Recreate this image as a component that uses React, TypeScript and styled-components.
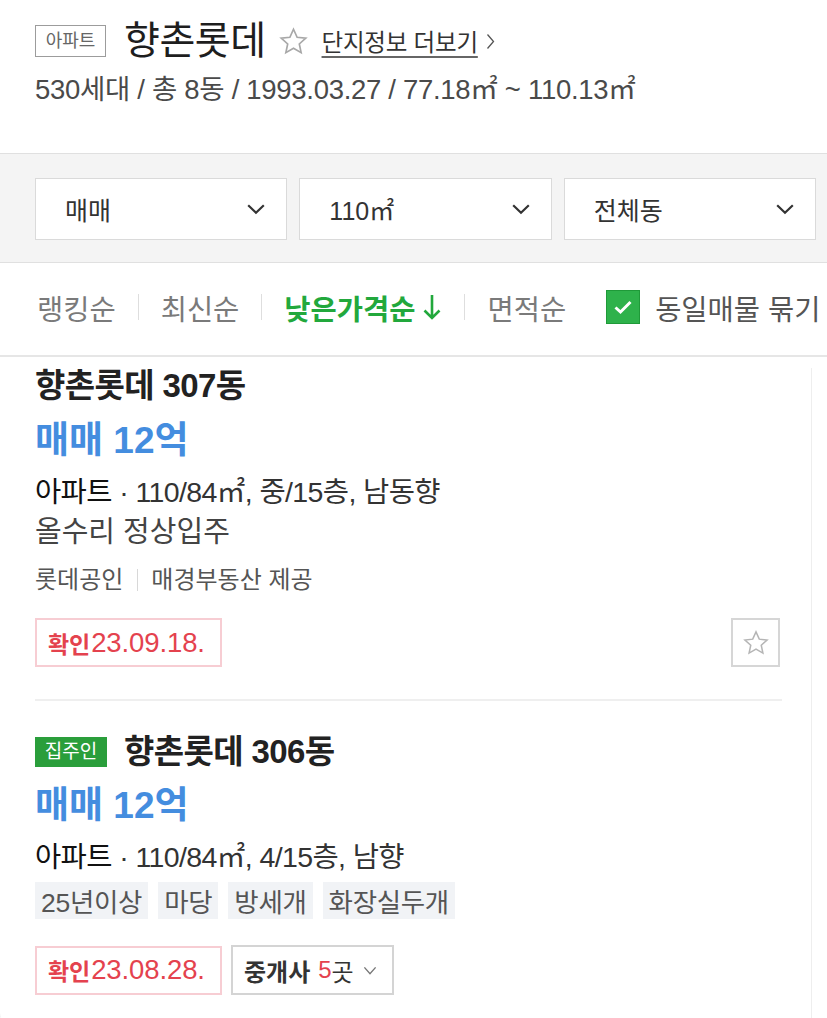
import React from "react";
import styled, { createGlobalStyle } from "styled-components";

const GlobalStyle = createGlobalStyle`
  html, body { margin: 0; padding: 0; background: #fff; }
  body { font-family: "Liberation Sans", "Noto Sans CJK KR", sans-serif; color: #222; }
  * { box-sizing: border-box; }
`;

const Page = styled.div`
  width: 827px;
  height: 1018px;
  overflow: hidden;
  background: #fff;
`;

/* ---------- header ---------- */
const Header = styled.header`
  height: 153px;
  padding: 18px 0 0 35px;
`;
const TitleRow = styled.div`
  display: flex;
  align-items: center;
  height: 46px;
`;
const TypeTag = styled.span`
  display: inline-flex;
  align-items: center;
  justify-content: center;
  width: 71px;
  height: 32px;
  border: 1px solid #9c9c9c;
  color: #666;
  font-size: 18px;
  line-height: 1;
`;
const ComplexName = styled.h1`
  margin: 0 0 0 18px;
  font-size: 39px;
  font-weight: 400;
  color: #1e1e1e;
  line-height: 46px;
  letter-spacing: -0.5px;
`;
const StarIcon = styled.svg<{ $size: number }>`
  width: ${(p) => p.$size}px;
  height: ${(p) => p.$size}px;
  flex: none;
`;
const HeaderStar = styled.span`
  display: inline-flex;
  margin-left: 12px;
`;
const MoreLink = styled.a`
  margin-left: 13px;
  display: inline-flex;
  align-items: center;
  gap: 8px;
  font-size: 23.5px;
  color: #333;
  text-decoration: underline;
  text-underline-offset: 5px;
  text-decoration-color: #666;
  letter-spacing: -0.2px;
`;
const Summary = styled.div`
  margin-top: 11px;
  font-size: 27.5px;
  line-height: 30px;
  color: #4a4a4a;
  letter-spacing: -0.3px;
`;

/* ---------- filters ---------- */
const FilterBar = styled.div`
  border-top: 1px solid #e0e0e0;
  border-bottom: 1px solid #e0e0e0;
  background: #f4f4f4;
  padding: 24px 11px 22px 35px;
  display: grid;
  grid-template-columns: repeat(3, 1fr);
  gap: 12px;
`;
const SelectBox = styled.div`
  height: 62px;
  background: #fff;
  border: 1px solid #dadada;
  display: flex;
  align-items: center;
  justify-content: space-between;
  padding: 0 20px 0 29px;
  font-size: 25px;
  color: #333;
`;

/* ---------- sort row ---------- */
const SortRow = styled.div`
  height: 94px;
  border-bottom: 2px solid #e6e6e6;
  display: flex;
  align-items: center;
  padding: 0 0 4px 37px;
  font-size: 28.5px;
  color: #7a7a7a;
`;
const SortItem = styled.span<{ $active?: boolean }>`
  display: inline-flex;
  align-items: center;
  color: ${(p) => (p.$active ? "#22a83c" : "#7a7a7a")};
  font-weight: ${(p) => (p.$active ? 700 : 400)};
  white-space: nowrap;
`;
const SortArrow = styled.svg`
  margin-left: 7px;
  flex: none;
`;
const SortSep = styled.span`
  width: 1px;
  height: 26px;
  background: #dedede;
  margin: 0 22px;
`;
const CheckLabel = styled.label`
  display: flex;
  align-items: center;
  gap: 15px;
  margin-left: 40px;
  color: #555;
  white-space: nowrap;
`;
const CheckBox = styled.span`
  width: 34px;
  height: 34px;
  background: #2eb24b;
  border: 1px solid #1f9a39;
  display: inline-flex;
  align-items: center;
  justify-content: center;
`;

/* ---------- list ---------- */
const ListCard = styled.section`
  width: 812px;
  height: 659px;
  border-right: 1px solid #eeeeee;
  border-bottom: 2px solid #e2e2e2;
  border-bottom-left-radius: 14px;
  padding: 0 29px 0 35px;
`;
const Line = styled.div<{ $mt: number }>`
  margin-top: ${(p) => p.$mt}px;
`;
const ItemTitle = styled(Line)`
  display: flex;
  align-items: center;
  gap: 17px;
  font-size: 33px;
  line-height: 36px;
  font-weight: 700;
  color: #222;
  letter-spacing: -0.6px;
`;
const OwnerBadge = styled.span`
  display: inline-flex;
  align-items: center;
  justify-content: center;
  width: 72px;
  height: 30px;
  background: #2a9e3b;
  color: #fff;
  font-size: 19px;
  font-weight: 400;
  letter-spacing: 0;
`;
const Price = styled(Line)`
  font-size: 37px;
  line-height: 40px;
  font-weight: 700;
  color: #448ddf;
`;
const Info = styled(Line)`
  font-size: 28.5px;
  line-height: 34px;
  color: #333;
  letter-spacing: -0.6px;
`;
const InfoType = styled.span`
  color: #111;
`;
const Desc = styled(Line)`
  font-size: 29px;
  line-height: 34px;
  color: #444;
`;
const Agent = styled(Line)`
  display: flex;
  align-items: center;
  font-size: 24px;
  line-height: 30px;
  color: #555;
`;
const AgentSep = styled.span`
  width: 1px;
  height: 22px;
  background: #d8d8d8;
  margin: 0 13px 0 14px;
`;
const TagRow = styled(Line)`
  display: flex;
  gap: 10px;
`;
const Tag = styled.span`
  height: 37px;
  display: inline-flex;
  align-items: center;
  padding: 0 6px;
  background: #f1f3f6;
  color: #555;
  font-size: 26.5px;
  letter-spacing: -0.3px;
`;
const BottomRow = styled(Line)`
  display: flex;
  align-items: center;
  gap: 9px;
`;
const ConfirmBadge = styled.span`
  width: 187px;
  height: 49px;
  border: 2px solid #f7cdd3;
  display: inline-flex;
  align-items: center;
  padding-left: 11px;
  color: #e4424e;
  font-size: 27.5px;
  letter-spacing: -0.1px;
`;
const ConfirmLabel = styled.b`
  font-size: 23px;
  margin-right: 1px;
`;
const BrokerButton = styled.span`
  width: 163px;
  height: 50px;
  border: 2px solid #d4d4d4;
  display: inline-flex;
  align-items: center;
  padding-left: 11px;
  font-size: 24px;
  color: #333;
`;
const BrokerCount = styled.span`
  margin-left: 8px;
  color: #e4424e;
`;
const BrokerChevron = styled.span`
  display: inline-flex;
  margin-left: 9px;
`;
const FavButton = styled.span`
  margin-left: auto;
  margin-right: 2px;
  width: 49px;
  height: 49px;
  border: 2px solid #d6d6d6;
  display: inline-flex;
  align-items: center;
  justify-content: center;
`;
const Divider = styled.div`
  margin-top: 32px;
  height: 2px;
  background: #efefef;
`;

const STAR = "12,2.5 14.8,8.7 21.5,9.4 16.5,13.9 17.9,20.6 12,17.2 6.1,20.6 7.5,13.9 2.5,9.4 9.2,8.7";

const Star = ({ size, color }: { size: number; color: string }) => (
  <StarIcon $size={size} viewBox="0 0 24 24">
    <polygon points={STAR} fill="none" stroke={color} strokeWidth={1.3} strokeLinejoin="miter" />
  </StarIcon>
);

const Chevron = ({ w, h, color, sw }: { w: number; h: number; color: string; sw: number }) => (
  <svg width={w} height={h} viewBox={`0 0 ${w} ${h}`}>
    <path d={`M${sw} ${sw} L${w / 2} ${h - sw} L${w - sw} ${sw}`} fill="none" stroke={color} strokeWidth={sw} />
  </svg>
);

const filters = ["매매", "110㎡", "전체동"];

export default function App() {
  return (
    <Page>
      <GlobalStyle />
      <Header>
        <TitleRow>
          <TypeTag>아파트</TypeTag>
          <ComplexName>향촌롯데</ComplexName>
          <HeaderStar>
            <Star size={31} color="#a8a8a8" />
          </HeaderStar>
          <MoreLink>
            단지정보 더보기
            <svg width="9" height="17" viewBox="0 0 9 17">
              <path d="M1.5 1.5 L7.5 8.5 L1.5 15.5" fill="none" stroke="#555" strokeWidth="1.3" />
            </svg>
          </MoreLink>
        </TitleRow>
        <Summary>530세대 / 총 8동 / 1993.03.27 / 77.18㎡ ~ 110.13㎡</Summary>
      </Header>

      <FilterBar>
        {filters.map((f) => (
          <SelectBox key={f}>
            {f}
            <Chevron w={20} h={12} color="#333" sw={2.2} />
          </SelectBox>
        ))}
      </FilterBar>

      <SortRow>
        <SortItem>랭킹순</SortItem>
        <SortSep />
        <SortItem>최신순</SortItem>
        <SortSep />
        <SortItem $active>
          낮은가격순
          <SortArrow width="20" height="28" viewBox="0 0 20 28">
            <path d="M10 2 V25 M2.5 17.5 L10 25 L17.5 17.5" fill="none" stroke="#22a83c" strokeWidth="2.6" />
          </SortArrow>
        </SortItem>
        <SortSep />
        <SortItem>면적순</SortItem>
        <CheckLabel>
          <CheckBox>
            <svg width="20" height="16" viewBox="0 0 20 16">
              <path d="M2.5 8.5 L7.5 13 L17.5 3" fill="none" stroke="#fff" strokeWidth="3" />
            </svg>
          </CheckBox>
          동일매물 묶기
        </CheckLabel>
      </SortRow>

      <ListCard>
        <ItemTitle $mt={11}>향촌롯데 307동</ItemTitle>
        <Price $mt={17}>매매 12억</Price>
        <Info $mt={14}>
          <InfoType>아파트</InfoType> · 110/84㎡, 중/15층, 남동향
        </Info>
        <Desc $mt={6}>올수리 정상입주</Desc>
        <Agent $mt={16}>
          롯데공인
          <AgentSep />
          매경부동산 제공
        </Agent>
        <BottomRow $mt={23}>
          <ConfirmBadge>
            <ConfirmLabel>확인</ConfirmLabel>23.09.18.
          </ConfirmBadge>
          <FavButton>
            <Star size={28} color="#b5b5b5" />
          </FavButton>
        </BottomRow>
        <Divider />

        <ItemTitle $mt={33}>
          <OwnerBadge>집주인</OwnerBadge>
          향촌롯데 306동
        </ItemTitle>
        <Price $mt={16}>매매 12억</Price>
        <Info $mt={14}>
          <InfoType>아파트</InfoType> · 110/84㎡, 4/15층, 남향
        </Info>
        <TagRow $mt={8}>
          <Tag>25년이상</Tag>
          <Tag>마당</Tag>
          <Tag>방세개</Tag>
          <Tag>화장실두개</Tag>
        </TagRow>
        <BottomRow $mt={26}>
          <ConfirmBadge>
            <ConfirmLabel>확인</ConfirmLabel>23.08.28.
          </ConfirmBadge>
          <BrokerButton>
            <b>중개사</b>
            <BrokerCount>5</BrokerCount>곳
            <BrokerChevron>
              <Chevron w={14} h={9} color="#777" sw={1.4} />
            </BrokerChevron>
          </BrokerButton>
        </BottomRow>
      </ListCard>
    </Page>
  );
}
